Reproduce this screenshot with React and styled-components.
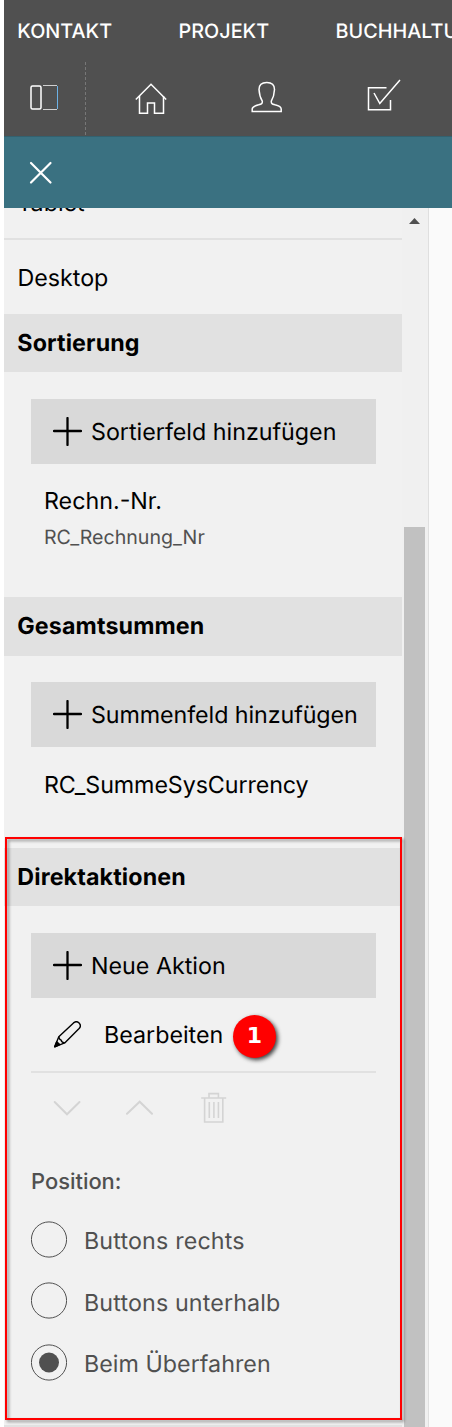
import React from "react";
import styled, { createGlobalStyle } from "styled-components";

const GlobalStyle = createGlobalStyle`
  * { box-sizing: border-box; }
  body {
    margin: 0;
    background: #fff;
    color: #000;
    font-family: Inter, "Liberation Sans", sans-serif;
    font-size: 23.25px;
    text-rendering: geometricPrecision;
    overflow: hidden;
  }
`;

const Page = styled.div`
  display: flex;
  flex-direction: column;
  height: 1427px;
  padding-left: 4px;
  overflow: hidden;
`;

const Header = styled.header`
  flex: none;
  height: 136px;
  background: #505050;
  color: #fff;
  overflow: hidden;
`;

const Menu = styled.nav`
  display: flex;
  height: 62px;
  padding-left: 13.3px;
`;

const MenuItem = styled.span`
  flex: none;
  width: ${(p) => p.$width}px;
  font-size: 19.8px;
  font-weight: 500;
  line-height: 62px;
  white-space: nowrap;
`;

const Toolbar = styled.div`
  display: flex;
  height: 74px;
`;

const Tool = styled.div`
  flex: none;
  display: flex;
  align-items: center;
  justify-content: center;
  width: ${(p) => p.$width}px;
  height: 74px;
  padding-bottom: ${(p) => p.$lift || 0}px;
`;

const DashedLine = styled.svg`
  flex: none;
  width: 1px;
  height: 74px;
`;

const ActionBar = styled.div`
  flex: none;
  display: flex;
  align-items: center;
  height: 72px;
  padding-left: 25px;
  border-top: 1px solid #33616f;
  background: #3a7181;
`;

const Body = styled.div`
  flex: 1;
  min-height: 0;
  display: flex;
`;

const Panel = styled.main`
  position: relative;
  flex: none;
  display: flex;
  flex-direction: column;
  width: 398px;
  background: #f1f1f1;
`;

const ScrollTrack = styled.div`
  flex: none;
  width: 26px;
  padding: 10px 0 0 2px;
  background: #f0f0f0;
`;

const ScrollArrow = styled.svg`
  display: block;
  width: 21px;
  height: 6px;
`;

const ScrollThumb = styled.div`
  width: 21px;
  height: 910px;
  margin-top: 303px;
  background: #c1c1c1;
`;

const Canvas = styled.div`
  flex: 1;
  border-left: 1px solid #dfdfdf;
  background: #fafafa;
`;

const ClippedRow = styled.div`
  display: flex;
  flex: none;
  align-items: flex-end;
  height: 32px;
  padding: 0 13.3px;
  border-bottom: 2px solid #e1e1e1;
  overflow: hidden;
  span { line-height: 74px; margin-bottom: -2px; }
`;

const Row = styled.div`
  flex: none;
  height: 74px;
  padding: 0 13.4px;
  line-height: 76px;
`;

const SectionTitle = styled.h2`
  flex: none;
  height: ${(p) => p.$height || 58}px;
  margin: 0;
  padding: 0 13.3px;
  background: #e1e1e1;
  font-size: 23.25px;
  font-weight: 700;
  letter-spacing: 0.12px;
  line-height: 58px;
`;

const SectionBody = styled.section`
  flex: none;
  height: ${(p) => p.$height}px;
  padding: ${(p) => p.$top || 27}px 26px 0 27px;
`;

const AddButton = styled.button`
  display: flex;
  align-items: center;
  gap: 9.5px;
  width: 345px;
  height: 65px;
  padding: 0 0 0 21.5px;
  border: 0;
  background: #d9d9d9;
  color: #000;
  font: inherit;
  letter-spacing: ${(p) => p.$tracking || 0}px;
  text-rendering: inherit;
  white-space: nowrap;
`;

const Field = styled.div`
  padding: ${(p) => p.$top}px 0 0 13px;
`;

const FieldName = styled.div`
  letter-spacing: ${(p) => p.$tracking || 0}px;
  line-height: 36px;
`;

const FieldId = styled.div`
  color: #505050;
  font-size: 19.6px;
  line-height: 36px;
`;

const Action = styled.div`
  display: flex;
  align-items: center;
  gap: 23px;
  height: 75px;
  padding-left: 22px;
  border-bottom: 2px solid #e1e1e1;
`;

const ActionTools = styled.div`
  display: flex;
  align-items: center;
  height: 70px;
  padding-left: 22px;
  color: #d4d4d4;
`;

const ActionTool = styled.span`
  display: flex;
  width: ${(p) => p.$width}px;
`;

const GroupLabel = styled.div`
  margin-top: 21px;
  color: #505050;
  font-size: 21.9px;
  line-height: 36px;
  font-weight: 500;
`;

const Options = styled.div`
  display: flex;
  flex-direction: column;
  gap: 25px;
  margin-top: 21px;
`;

const Option = styled.label`
  display: flex;
  align-items: center;
  gap: 17px;
  height: 36.5px;
  color: #505050;
  letter-spacing: ${(p) => p.$tracking || 0}px;
  span { padding-top: 3px; }
`;

const Radio = styled.svg`
  flex: none;
  width: 36px;
  height: 37px;
`;

const Highlight = styled.div`
  position: absolute;
  left: 1px;
  top: 629px;
  width: 397px;
  height: 583px;
  border: 2px solid #f00;
  filter: drop-shadow(2px 2px 1.5px rgba(0, 0, 0, 0.4));
  z-index: 1;
`;

const Badge = styled.span`
  position: absolute;
  left: 229px;
  top: 807px;
  width: 43px;
  height: 43px;
  border-radius: 50%;
  background: #f00;
  box-shadow: 2px 2px 4px rgba(0, 0, 0, 0.75);
  color: #fff;
  font: bold 22px/44px "DejaVu Sans", sans-serif;
  text-align: center;
`;

const NextSection = styled.div`
  flex: none;
  height: 2px;
  background: #e1e1e1;
`;

const LayoutIcon = () => (
  <svg width="32" height="28" fill="none" stroke="#fff">
    <rect x="2" y="2" width="10" height="23" rx="1.5" strokeWidth="1.5" />
    <path d="M14 1.5h14" stroke="#d0d0d0" />
    <path d="M14 25.5h14" stroke="#d0d0d0" />
    <path d="M28.5 2v23" stroke="#6cb1e5" />
  </svg>
);

const HomeIcon = () => (
  <svg width="32" height="32" fill="none" stroke="#fff" strokeWidth="1.5">
    <path d="M.8 16.5 16 1.3l15.2 15.2" />
    <path d="M4.5 13v17.3h8V20h7v10.3h9V13" />
  </svg>
);

const PersonIcon = () => (
  <svg width="32" height="32" fill="none" stroke="#fff" strokeWidth="1.5">
    <path d="M11.3 20.2C9 16.5 8.3 13 8 8.5 8 3.5 11.2 1.5 15.8 1.5s7.7 2 7.7 7c-.2 4.5-1.1 8-3.2 11.7-.2 2.4.7 2.7 3.7 3.6 5 1.3 6.2 2.2 6.2 4.2v2.4H1.2V28c0-2 1.6-2.9 6.4-4.2 3-.9 3.9-1.2 3.7-3.6Z" />
  </svg>
);

const TaskIcon = () => (
  <svg width="34" height="32" fill="none" stroke="#fff" strokeWidth="1.5">
    <path d="M19.5 8.8H1.5v22h22V21" />
    <path d="m7 14 5.8 10.5L33 1" />
  </svg>
);

const CloseIcon = () => (
  <svg width="24" height="24" stroke="#fff" strokeWidth="2.2" strokeLinecap="round">
    <path d="m2 2 19.5 19.5M21.5 2 2 21.5" />
  </svg>
);

const PlusIcon = () => (
  <svg width="29" height="29" stroke="#000" strokeWidth="2.3" strokeLinecap="round">
    <path d="M14.5 1v27M1 14h27" />
  </svg>
);

const PencilIcon = () => (
  <svg width="28" height="28" fill="none" stroke="#000" strokeWidth="1.4" strokeLinejoin="round">
    <g transform="translate(.5 -.5)">
      <path d="M1.2 26.3 5.3 16.2 20 2.4c2-1.7 4.1-1.4 5.6.1 1.6 1.7 1.6 3.8 0 5.5L11.2 22.4Z" />
      <path d="M5.3 16.2c.2 2 .8 2.9 2.2 3.2.4 1.8 1.6 2.8 3.7 3" />
      <path d="m1.2 26.3 2-5 3 2.8Z" fill="#000" />
    </g>
  </svg>
);

const ChevronIcon = ({ up }) => (
  <svg width="28" height="16" fill="none" stroke="currentColor" strokeWidth="2" strokeLinecap="round">
    <path d={up ? "M2 13.8 14.7 1.7l12.3 12.1" : "M1.7 2 14 14.3 26.5 2"} />
  </svg>
);

const TrashIcon = () => (
  <svg width="26" height="32" fill="none" stroke="currentColor" strokeWidth="1.6">
    <path d="M.2 6h25M8 6V1.6h9.4V6M3.6 6v24h18.2V6M8.3 10v16M12.9 10v16M17.4 10v16" />
  </svg>
);

const options = [
  { label: "Buttons rechts", tracking: 0.16 },
  { label: "Buttons unterhalb", tracking: 0.14 },
  { label: "Beim Überfahren", tracking: 0.03, selected: true },
];

export default function App() {
  return (
    <>
      <GlobalStyle />
      <Page>
        <Header>
          <Menu>
            <MenuItem $width={161.3}>KONTAKT</MenuItem>
            <MenuItem $width={157}>PROJEKT</MenuItem>
            <MenuItem $width={160}>BUCHHALTUNG</MenuItem>
          </Menu>
          <Toolbar>
            <Tool $width={81} $lift={2}><LayoutIcon /></Tool>
            <DashedLine>
              <path d="M.5 0v74" stroke="#777" strokeDasharray="3 2" />
            </DashedLine>
            <Tool $width={129} $lift={1}><HomeIcon /></Tool>
            <Tool $width={104} $lift={4}><PersonIcon /></Tool>
            <Tool $width={129} $lift={8}><TaskIcon /></Tool>
          </Toolbar>
        </Header>
        <ActionBar><CloseIcon /></ActionBar>
        <Body>
          <Panel>
            <ClippedRow><span>Tablet</span></ClippedRow>
            <Row>Desktop</Row>
            <SectionTitle>Sortierung</SectionTitle>
            <SectionBody $height={225}>
              <AddButton><PlusIcon />Sortierfeld hinzufügen</AddButton>
              <Field $top={19}>
                <FieldName>Rechn.-Nr.</FieldName>
                <FieldId>RC_Rechnung_Nr</FieldId>
              </Field>
            </SectionBody>
            <SectionTitle $height={59}>Gesamtsummen</SectionTitle>
            <SectionBody $height={192} $top={26}>
              <AddButton $tracking={-0.07}><PlusIcon />Summenfeld hinzufügen</AddButton>
              <Field $top={20}>
                <FieldName $tracking={-0.09}>RC_SummeSysCurrency</FieldName>
              </Field>
            </SectionBody>
            <SectionTitle>Direktaktionen</SectionTitle>
            <SectionBody $height={519}>
              <AddButton><PlusIcon />Neue Aktion</AddButton>
              <Action><PencilIcon />Bearbeiten</Action>
              <ActionTools>
                <ActionTool $width={72}><ChevronIcon /></ActionTool>
                <ActionTool $width={76}><ChevronIcon up /></ActionTool>
                <ActionTool $width={26}><TrashIcon /></ActionTool>
              </ActionTools>
              <GroupLabel>Position:</GroupLabel>
              <Options>
                {options.map(({ label, tracking, selected }) => (
                  <Option key={label} $tracking={tracking}>
                    <Radio>
                      <circle cx="18" cy="18.5" r="17.6" fill="none" stroke="#505050" strokeWidth="1" />
                      {selected && <circle cx="18" cy="18.5" r="10" fill="#505050" />}
                    </Radio>
                    <span>{label}</span>
                  </Option>
                ))}
              </Options>
            </SectionBody>
            <NextSection />
            <Highlight />
            <Badge>1</Badge>
          </Panel>
          <ScrollTrack>
            <ScrollArrow><path d="M5 6 10.5 0 16 6Z" fill="#505050" /></ScrollArrow>
            <ScrollThumb />
          </ScrollTrack>
          <Canvas />
        </Body>
      </Page>
    </>
  );
}
